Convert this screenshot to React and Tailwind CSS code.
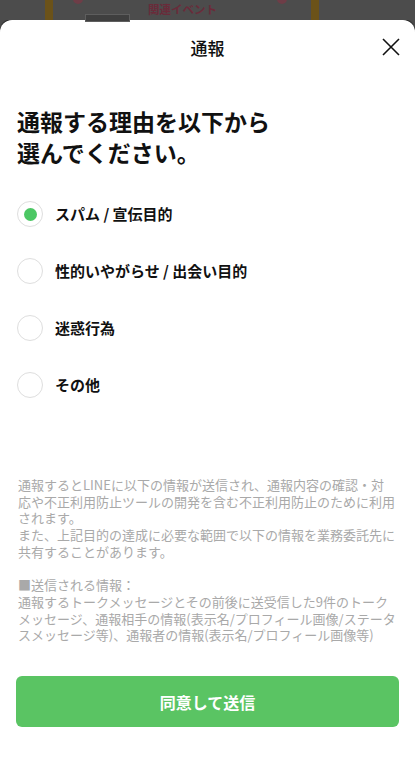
import React, { useState } from "react";

const options = [
  "スパム / 宣伝目的",
  "性的いやがらせ / 出会い目的",
  "迷惑行為",
  "その他",
];

export default function App() {
  const [sel, setSel] = useState(0);
  return (
    <div
      className="w-[415px] h-[762px] overflow-hidden bg-[#4c4c4c] flex flex-col"
      style={{ fontFamily: '"Noto Sans CJK JP", "Noto Sans", sans-serif' }}
    >
      {/* dimmed background content */}
      <div className="relative h-[20px] shrink-0 bg-[#4c4c4c]">
        <div className="absolute left-[45px] top-0 w-[8px] h-[20px] bg-[#6b5219]" />
        <div className="absolute left-[311px] top-0 w-[8px] h-[20px] bg-[#6b5219]" />
        <div className="absolute left-[73px] top-[-6px] w-[10px] h-[10px] rounded-full bg-[#6e3d47]" />
        <div className="absolute left-[277px] top-[-6px] w-[10px] h-[10px] rounded-full bg-[#6e3d47]" />
        <div className="absolute left-[85px] top-[14px] w-[45px] h-[8px] border border-[#5e5e5e] bg-[#3f3f3f]" />
        <div className="absolute left-[148px] top-[1px] text-[11.5px] leading-[16px] font-bold text-[#6a2b3a]">
          関連イベント
        </div>
      </div>

      {/* sheet */}
      <div className="flex-1 bg-white rounded-t-[12px] flex flex-col shadow-[0_-1px_1px_rgba(0,0,0,0.6)]">
        <div className="relative h-[56px] flex items-center justify-center">
          <span className="text-[17px] font-medium text-[#111]">通報</span>
          <svg
            className="absolute right-[15px] top-[18px]"
            width="18"
            height="18"
            viewBox="0 0 18 18"
            fill="none"
            stroke="#111"
            strokeWidth="1.6"
          >
            <path d="M1 1 L17 17 M17 1 L1 17" />
          </svg>
        </div>

        <h1 className="mt-[30px] px-[17px] text-[23px] leading-[31px] font-bold text-[#111]">
          通報する理由を以下から
          <br />
          選んでください。
        </h1>

        <div className="mt-[33px] flex flex-col px-[17px] gap-[31px]">
          {options.map((o, i) => (
            <button
              key={o}
              onClick={() => setSel(i)}
              className="flex items-center gap-[12px] text-left h-[26px]"
            >
              <span className="w-[26px] h-[26px] rounded-full border border-[#dedede] flex items-center justify-center shrink-0">
                {sel === i && (
                  <span className="w-[13px] h-[13px] rounded-full bg-[#4cc764]" />
                )}
              </span>
              <span className="text-[15px] font-bold text-[#111]">{o}</span>
            </button>
          ))}
        </div>

        <div className="mt-[79px] px-[18px] text-[13px] leading-[16.7px] text-[#a9a9a9]">
          <p>
            通報するとLINEに以下の情報が送信され、通報内容の確認・対応や不正利用防止ツールの開発を含む不正利用防止のために利用されます。
          </p>
          <p>
            また、上記目的の達成に必要な範囲で以下の情報を業務委託先に共有することがあります。
          </p>
          <p className="mt-[16.7px]">■送信される情報：</p>
          <p>
            通報するトークメッセージとその前後に送受信した9件のトークメッセージ、通報相手の情報(表示名/プロフィール画像/ステータスメッセージ等)、通報者の情報(表示名/プロフィール画像等)
          </p>
        </div>

        <div className="mt-[32px] px-[16px]">
          <button className="w-full h-[51px] rounded-[6px] bg-[#5ac463] text-white text-[16px] font-bold">
            同意して送信
          </button>
        </div>
      </div>
    </div>
  );
}
